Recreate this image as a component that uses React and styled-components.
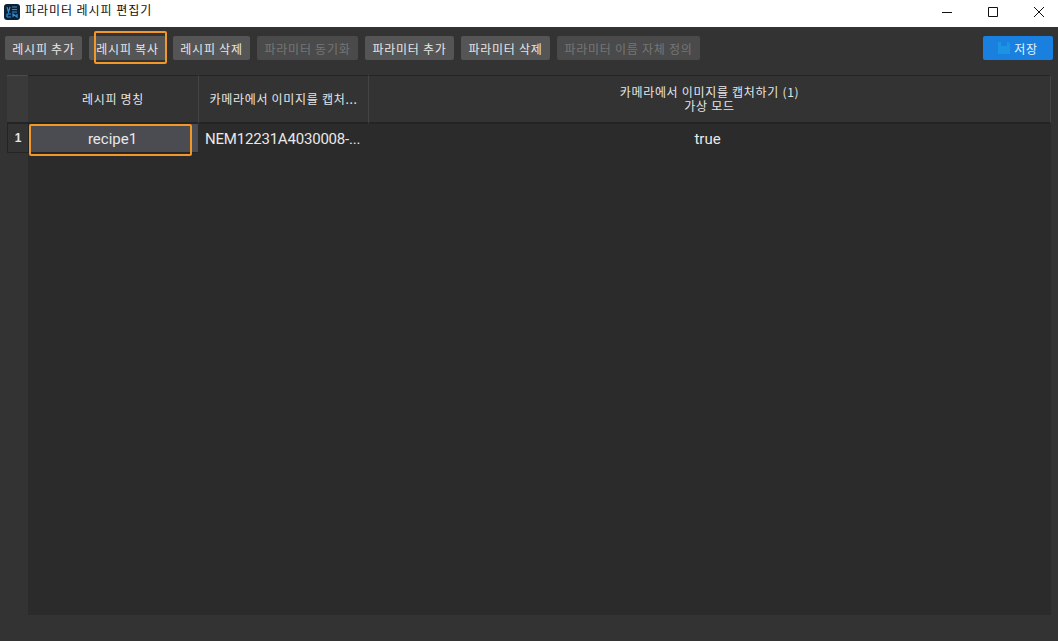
import React from "react";
import styled, {createGlobalStyle} from "styled-components";

const GlobalStyle = createGlobalStyle`
  html, body {
    margin: 0;
    padding: 0;
    background: #333333;
  }
  body {
    font-family: "Noto Sans CJK KR", "Liberation Sans", sans-serif;
  }
`;

const Page = styled.div`
  width: 1058px;
  height: 641px;
  display: flex;
  flex-direction: column;
  overflow: hidden;
  background: #333333;
`;

const TitleBar = styled.div`
  height: 27px;
  box-sizing: border-box;
  display: flex;
  align-items: center;
  background: #ffffff;
  color: #111111;
  font-size: 12px;
  padding: 0 0 4px 4px;
`;

const TitleText = styled.span`
  margin-left: 5px;
  margin-bottom: 4px;
  letter-spacing: 0.95px;
`;

const WindowButtons = styled.div`
  margin-left: auto;
  display: flex;
  gap: 8px;
  height: 100%;
`;

const WindowButton = styled.div`
  width: 38px;
  display: flex;
  align-items: center;
  justify-content: center;
`;

const Toolbar = styled.div`
  height: 48px;
  display: flex;
  align-items: flex-start;
  gap: 7px;
  padding: 9px 5px 0;
  box-sizing: border-box;
`;

const ToolButton = styled.button`
  position: relative;
  width: ${props => props.width}px;
  height: 24px;
  padding: 0;
  border: none;
  border-radius: 2px;
  background: ${props => props.disabled ? "#4a4a4a" : "#555555"};
  color: ${props => props.disabled ? "#767676" : "#e6e6e6"};
  font-family: inherit;
  font-size: 12px;
  letter-spacing: 0.75px;
  white-space: nowrap;
`;

const SaveButton = styled(ToolButton)`
  margin-left: auto;
  width: 70px;
  background: #1a80e0;
  color: #e8f2fc;
  display: flex;
  align-items: center;
  justify-content: center;
  gap: 4px;
`;

const ButtonHighlight = styled.span`
  position: absolute;
  left: 5px;
  top: -5px;
  width: 69px;
  height: 29px;
  border: 2px solid #f2982a;
  border-radius: 2px;
`;

const TableWrap = styled.div`
  margin-left: 7px;
  width: 1044px;
  height: 540px;
  display: grid;
  grid-template-columns: 21px 171px 170px 1fr;
  grid-template-rows: 49px 29px 1fr;
`;

const Corner = styled.div`
  background: #3a3a3a;
  border-top: 1px solid #4a4a4a;
  border-bottom: 2px solid #242424;
`;

const HeaderCell = styled.div`
  display: flex;
  align-items: center;
  justify-content: center;
  text-align: center;
  background: #333333;
  color: #e6e6e6;
  font-size: 12px;
  line-height: 14px;
  letter-spacing: 0.7px;
  border-top: 1px solid #242424;
  border-right: 1px solid #444444;
  border-bottom: 2px solid #242424;
  white-space: pre-line;
`;

const RowNumber = styled.div`
  display: flex;
  align-items: center;
  justify-content: center;
  background: #333333;
  color: #e6e6e6;
  font-family: "Liberation Sans", sans-serif;
  font-size: 12px;
  font-weight: 700;
  border-left: 1px solid #242424;
  border-bottom: 1px solid #242424;
`;

const Cell = styled.div`
  display: flex;
  align-items: center;
  justify-content: ${props => props.left ? "flex-start" : "center"};
  padding: ${props => props.left ? "0 0 0 6px" : "1px 5px 0 0"};
  background: #2b2b2b;
  color: #e8e8e8;
  font-family: "Roboto", sans-serif;
  font-size: 15px;
  letter-spacing: ${props => props.left ? "-0.2px" : "0"};
  white-space: nowrap;
`;

const SelectedCell = styled(Cell)`
  position: relative;
  background: #4b4c52;
  border-left: 1px solid #242424;
  border-right: 1px solid #2b2b2b;
  border-bottom: 1px solid #242424;
  box-sizing: border-box;
  padding: 1px 2px 0 0;
`;

const CellHighlight = styled.span`
  position: absolute;
  left: 0;
  top: 0;
  width: 159px;
  height: 28px;
  border: 2px solid #f2982a;
  border-radius: 2px;
`;

const Filler = styled.div`
  grid-column: 2 / 5;
  background: #2b2b2b;
`;

const AppIcon = () => (
  <svg width="16" height="16" viewBox="0 0 16 16">
    <rect width="16" height="16" rx="3" fill="#0d2136" />
    <path d="M3 3l1.5 5L6 3M8 3h5M8 5.5h5M8 8h5M3 10h4M3 13h4M3 10v3M9 13v-3l4 3v-3" stroke="#2f8fd8" strokeWidth="1.2" fill="none" />
  </svg>
);

const SaveIcon = () => (
  <svg width="12" height="12" viewBox="0 0 12 12">
    <path d="M0 0h3v4h6V0h1l2 2v10H0z" fill="#1c93e3" />
  </svg>
);

const buttons = [
  {label: "레시피 추가", width: 77},
  {label: "레시피 복사", width: 77, highlighted: true},
  {label: "레시피 삭제", width: 77},
  {label: "파라미터 동기화", width: 101, disabled: true},
  {label: "파라미터 추가", width: 89},
  {label: "파라미터 삭제", width: 89},
  {label: "파라미터 이름 자체 정의", width: 143, disabled: true},
];

export default function App() {
  return (
    <Page>
      <GlobalStyle />
      <TitleBar>
        <AppIcon />
        <TitleText>파라미터 레시피 편집기</TitleText>
        <WindowButtons>
          <WindowButton>
            <svg width="10" height="10" viewBox="0 0 10 10"><path d="M0 5.5h10" stroke="#111" /></svg>
          </WindowButton>
          <WindowButton>
            <svg width="10" height="10" viewBox="0 0 10 10"><path d="M.5.5h9v9h-9z" stroke="#111" fill="none" /></svg>
          </WindowButton>
          <WindowButton>
            <svg width="10" height="10" viewBox="0 0 10 10"><path d="M0 0l10 10M10 0L0 10" stroke="#111" /></svg>
          </WindowButton>
        </WindowButtons>
      </TitleBar>
      <Toolbar>
        {buttons.map(b => (
          <ToolButton key={b.label} width={b.width} disabled={b.disabled}>
            {b.label}
            {b.highlighted && <ButtonHighlight />}
          </ToolButton>
        ))}
        <SaveButton>
          <SaveIcon />
          저장
        </SaveButton>
      </Toolbar>
      <TableWrap>
        <Corner />
        <HeaderCell>레시피 명칭</HeaderCell>
        <HeaderCell>카메라에서 이미지를 캡처...</HeaderCell>
        <HeaderCell>{"카메라에서 이미지를 캡처하기 (1)\n가상 모드"}</HeaderCell>
        <RowNumber>1</RowNumber>
        <SelectedCell>
          recipe1
          <CellHighlight />
        </SelectedCell>
        <Cell left>NEM12231A4030008-...</Cell>
        <Cell>true</Cell>
        <div />
        <Filler />
      </TableWrap>
    </Page>
  );
}
